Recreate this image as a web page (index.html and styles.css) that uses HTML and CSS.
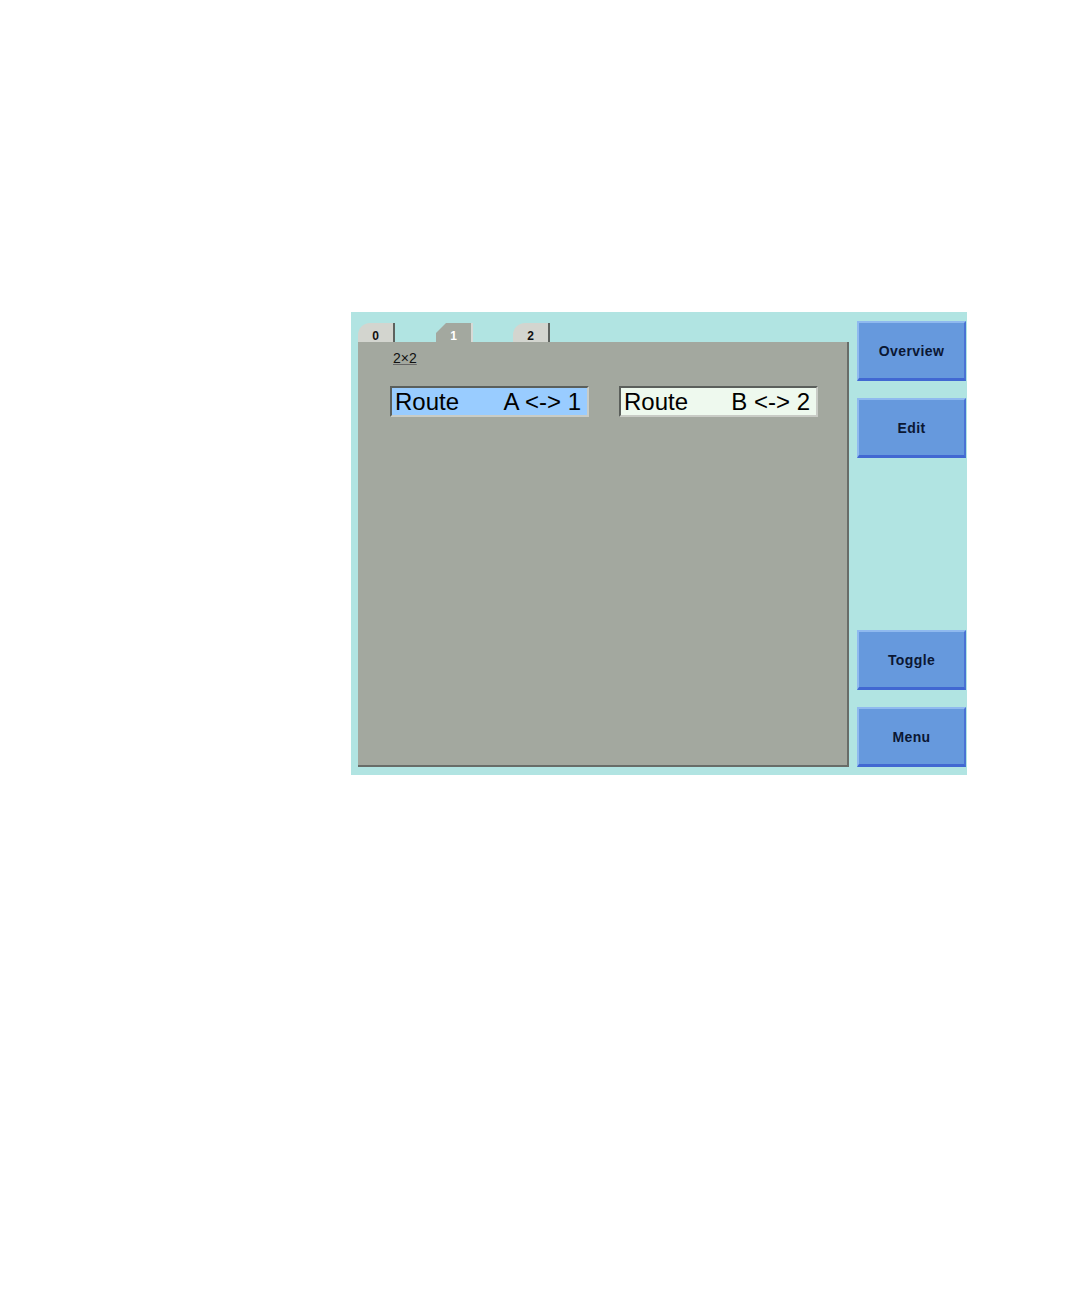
FILE: index.html
```html
<!DOCTYPE html>
<html>
<head>
<meta charset="utf-8">
<link rel="stylesheet" href="styles.css">
</head>
<body>
<div class="screen">
  <div class="left">
    <div class="tabs">
      <div class="tab">0</div>
      <div class="tab active">1</div>
      <div class="tab">2</div>
    </div>
    <div class="panel">
      <div class="label">2×2</div>
      <div class="routes">
        <div class="route sel"><span>Route</span><span>A &lt;-&gt; 1</span></div>
        <div class="route"><span>Route</span><span>B &lt;-&gt; 2</span></div>
      </div>
    </div>
  </div>
  <div class="side">
    <div class="group">
      <div class="btn">Overview</div>
      <div class="btn">Edit</div>
    </div>
    <div class="group">
      <div class="btn">Toggle</div>
      <div class="btn">Menu</div>
    </div>
  </div>
</div>
</body>
</html>
```
FILE: styles.css
```css
html, body {
  margin: 0;
  padding: 0;
  background: #ffffff;
}
body {
  padding: 312px 0 0 351px;
  font-family: "Liberation Sans", Arial, sans-serif;
}
.screen {
  width: 616px;
  height: 463px;
  background: #b1e4e2;
  display: flex;
  box-sizing: border-box;
  padding: 0 1px 0 7px;
}
.left {
  width: 491px;
  display: flex;
  flex-direction: column;
  padding-top: 11px;
}
.tabs {
  display: flex;
  height: 19px;
  gap: 41px;
  align-items: flex-end;
}
.tab {
  width: 35px;
  height: 19px;
  background: #d3d5cf;
  border-right: 2px solid #5d625e;
  border-top-left-radius: 12px;
  font-size: 12px;
  font-weight: bold;
  color: #111;
  display: flex;
  align-items: flex-end;
  justify-content: center;
  line-height: 12px;
  box-sizing: content-box;
}
.tab.active {
  background: #a3a89f;
  color: #ffffff;
  border-top-left-radius: 0;
  clip-path: polygon(10px 0, 100% 0, 100% 100%, 0 100%, 0 10px);
  border-right: 2px solid #d8dad6;
}
.tab:nth-child(3) { margin-left: -1px; }
.panel {
  height: 425px;
  background: #a3a89f;
  border-right: 2px solid #686c68;
  border-bottom: 2px solid #686c68;
  box-sizing: border-box;
  padding: 8px 0 0 32px;
}
.label {
  font-size: 14px;
  color: #111;
  margin-left: 3px;
  line-height: 17px;
  text-decoration: underline;
  text-decoration-color: #666;
}
.routes {
  display: flex;
  gap: 30px;
  margin-top: 19px;
}
.route {
  width: 199px;
  height: 31px;
  box-sizing: border-box;
  border-top: 2px solid #5b5f5b;
  border-left: 2px solid #5b5f5b;
  border-bottom: 2px solid #c9ccc6;
  border-right: 2px solid #c9ccc6;
  background: #eef9ee;
  display: flex;
  justify-content: space-between;
  align-items: center;
  padding: 0 6px 0 3px;
  font-size: 24px;
  color: #000;
  line-height: 27px;
}
.route.sel {
  background: #99ccff;
}
.side {
  margin-left: 8px;
  display: flex;
  flex-direction: column;
  justify-content: space-between;
  padding: 9px 0 8px 0;
}
.group {
  display: flex;
  flex-direction: column;
  gap: 17px;
}
.btn {
  width: 109px;
  height: 60px;
  box-sizing: border-box;
  background: #6699dd;
  border-top: 2px solid #8fb9ef;
  border-left: 2px solid #8fb9ef;
  border-bottom: 3px solid #4168d2;
  border-right: 2px solid #4a72d4;
  display: flex;
  align-items: center;
  justify-content: center;
  font-size: 14px;
  font-weight: bold;
  letter-spacing: 0.4px;
  color: #0b1733;
}
```
